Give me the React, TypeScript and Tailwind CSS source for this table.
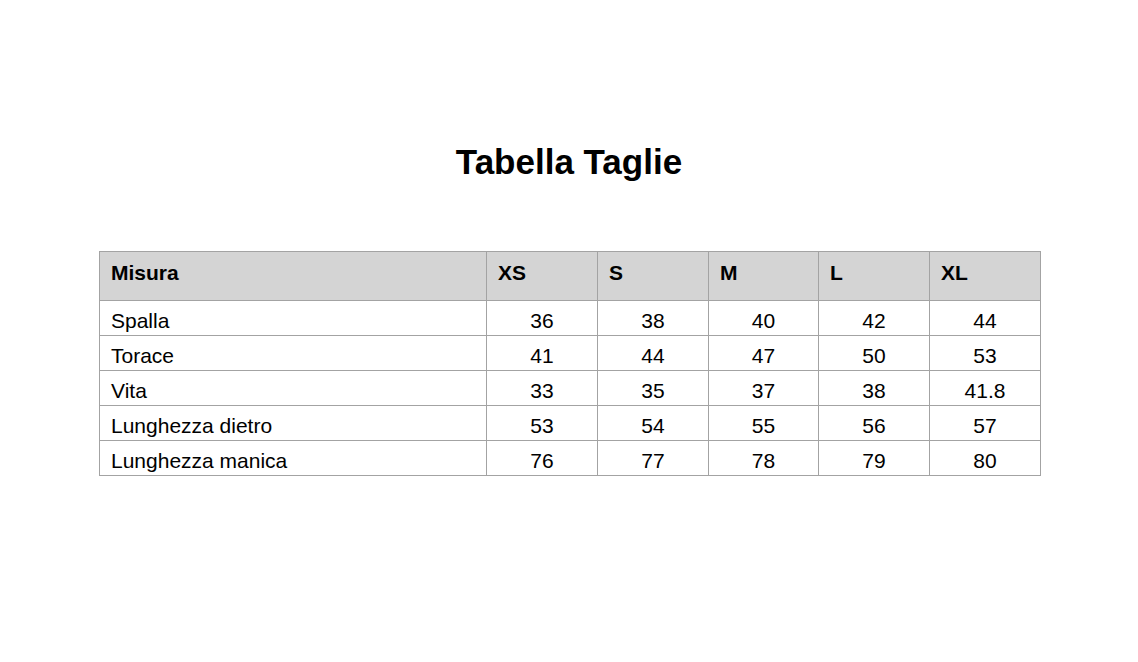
const sizes = ["XS", "S", "M", "L", "XL"];

const rows = [
  { name: "Spalla", values: ["36", "38", "40", "42", "44"] },
  { name: "Torace", values: ["41", "44", "47", "50", "53"] },
  { name: "Vita", values: ["33", "35", "37", "38", "41.8"] },
  { name: "Lunghezza dietro", values: ["53", "54", "55", "56", "57"] },
  { name: "Lunghezza manica", values: ["76", "77", "78", "79", "80"] },
];

export default function App() {
  return (
    <div className="min-h-[662px] w-full bg-white pt-[142px] font-['Liberation_Sans',Arial,sans-serif] text-black">
      <h1 className="text-center text-[35px] font-bold leading-[40px]">Tabella Taglie</h1>
      <div className="mt-[69px] flex justify-center pl-[2px]">
        <table className="w-[942px] table-fixed border-collapse text-[21px] leading-[24px]">
          <colgroup>
            <col className="w-[387px]" />
            <col className="w-[111px]" />
            <col className="w-[111px]" />
            <col className="w-[110px]" />
            <col className="w-[111px]" />
            <col className="w-[111px]" />
          </colgroup>
          <thead>
            <tr className="h-[49px] bg-[#d4d4d4]">
              <th className="border border-[#a3a3a3] px-[11px] pt-[9px] pb-0 text-left align-top font-bold">Misura</th>
              {sizes.map((s) => (
                <th key={s} className="border border-[#a3a3a3] px-[11px] pt-[9px] pb-0 text-left align-top font-bold">
                  {s}
                </th>
              ))}
            </tr>
          </thead>
          <tbody>
            {rows.map((r) => (
              <tr key={r.name} className="h-[35px]">
                <td className="border border-[#a3a3a3] px-[11px] pt-[5px] align-middle">{r.name}</td>
                {r.values.map((v, i) => (
                  <td key={i} className="border border-[#a3a3a3] px-1 pt-[5px] text-center align-middle">
                    {v}
                  </td>
                ))}
              </tr>
            ))}
          </tbody>
        </table>
      </div>
    </div>
  );
}
